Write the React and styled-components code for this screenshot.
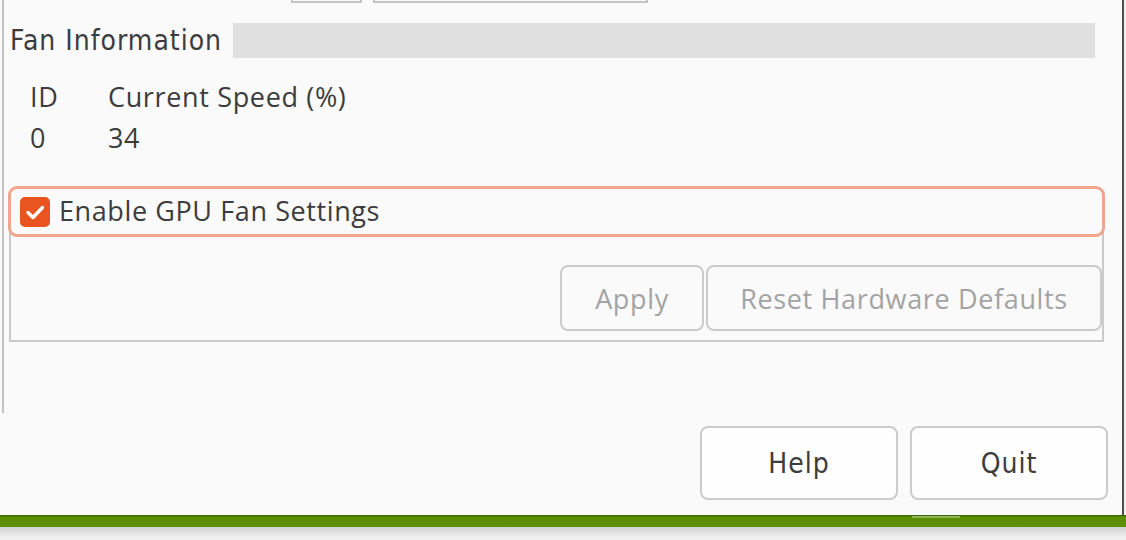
import styled, { createGlobalStyle } from "styled-components"

const GlobalStyle = createGlobalStyle`
    html, body {
        margin: 0;
        padding: 0;
        background: #f2f2f2;
    }
    * {
        box-sizing: border-box;
    }
`

const narrowFont = `"DejaVu Sans Condensed", "Liberation Sans Narrow", sans-serif`
const bodyFont = `"Open Sans", "Noto Sans", sans-serif`

const Screen = styled.div`
    width: 1126px;
    height: 540px;
    display: flex;
    flex-direction: column;
    overflow: hidden;
    background: #f3f3f3;
    font-family: ${bodyFont};
    color: #3c3c3c;
`
const Window = styled.div`
    width: 1124px;
    height: 515px;
    flex-shrink: 0;
    background: #fafafa;
    border-right: 2px solid #4d4d4d;
    display: flex;
    flex-direction: column;
`
const Desktop = styled.div`
    height: 12px;
    flex-shrink: 0;
    background: linear-gradient(#3e6a00 0, #3e6a00 1px, #5a8d00 2px, #5c9100 100%);
    padding-left: 912px;
`
const DesktopMark = styled.div`
    width: 48px;
    height: 2px;
    margin-top: 1px;
    background: #8fb45c;
`
const Shadow = styled.div`
    flex: 1;
    background: linear-gradient(#d2d2d2, #ededed 70%, #f2f2f2);
`
const Page = styled.div`
    margin-left: 2px;
    height: 413px;
    border-left: 2px solid #c2c2c2;
    display: flex;
    flex-direction: column;
`
const StubRow = styled.div`
    display: flex;
    gap: 11px;
    padding-left: 287px;
`
const Stub = styled.div`
    width: ${props => props.w}px;
    height: 3px;
    border: 2px solid #c4c4c4;
    border-top: none;
`
const SectionRow = styled.div`
    display: flex;
    align-items: center;
    gap: 11px;
    margin-top: 20px;
    padding-left: 6px;
    padding-right: 27px;
`
const SectionLabel = styled.div`
    font-family: ${narrowFont};
    font-size: 28px;
    letter-spacing: 1px;
    line-height: 35px;
    white-space: nowrap;
`
const SectionBar = styled.div`
    flex: 1;
    height: 35px;
    background: #e0e0e0;
`
const Table = styled.div`
    display: grid;
    grid-template-columns: 78px auto;
    justify-content: start;
    padding-left: 26px;
    margin-top: 18px;
    font-size: 27px;
    letter-spacing: 0.65px;
    line-height: 41px;
`
const Cell = styled.div`
    white-space: nowrap;
`
const Frame = styled.div`
    display: flex;
    flex-direction: column;
    margin-top: 28px;
    padding-left: 4px;
    padding-right: 17px;
`
const FocusRing = styled.label`
    position: relative;
    z-index: 1;
    height: 51px;
    display: flex;
    align-items: center;
    gap: 9px;
    padding: 0 0 2px 9px;
    border: 3px solid #f0a68c;
    border-radius: 9px;
    background: #fafafa;
    font-size: 27px;
    letter-spacing: 0.6px;
`
const Check = styled.span`
    width: 30px;
    height: 30px;
    margin-top: 2px;
    border-radius: 5px;
    background: #e95420;
    display: flex;
    align-items: center;
    justify-content: center;
`
const FrameBody = styled.div`
    margin: -25px 1px 0;
    height: 130px;
    border: 2px solid #cacaca;
    display: flex;
    justify-content: flex-end;
    align-items: flex-end;
    gap: 2px;
    padding: 0 0 9px;
`
const Button = styled.button`
    height: ${props => props.h}px;
    width: ${props => props.w}px;
    border: 2px solid #cbcbcb;
    border-radius: 8px;
    background: ${props => (props.disabled ? "#fafafa" : "#fefefe")};
    color: ${props => (props.disabled ? "#a3a3a3" : "#3c3c3c")};
    font-family: ${props => (props.narrow ? narrowFont : bodyFont)};
    font-size: ${props => (props.narrow ? 28 : 27)}px;
    letter-spacing: ${props => (props.narrow ? "1px" : "0.65px")};
    padding: 0;
    cursor: pointer;
`
const ActionRow = styled.div`
    display: flex;
    justify-content: flex-end;
    gap: 12px;
    margin-top: 13px;
    padding-right: 14px;
`

const App = () => {
    return (
        <>
            <GlobalStyle />
            <Screen>
                <Window>
                    <Page>
                        <StubRow>
                            <Stub w={71} />
                            <Stub w={275} />
                        </StubRow>
                        <SectionRow>
                            <SectionLabel>Fan Information</SectionLabel>
                            <SectionBar />
                        </SectionRow>
                        <Table>
                            <Cell>ID</Cell>
                            <Cell>Current Speed (%)</Cell>
                            <Cell>0</Cell>
                            <Cell>34</Cell>
                        </Table>
                        <Frame>
                            <FocusRing>
                                <Check>
                                    <svg width="26" height="26" viewBox="0 0 26 26">
                                        <path d="M6 13.5l5 5L20.5 8.5" fill="none" stroke="#fff" strokeWidth="3.4" strokeLinecap="round" strokeLinejoin="round" />
                                    </svg>
                                </Check>
                                Enable GPU Fan Settings
                            </FocusRing>
                            <FrameBody>
                                <Button disabled w={144} h={66}>Apply</Button>
                                <Button disabled w={396} h={66}>Reset Hardware Defaults</Button>
                            </FrameBody>
                        </Frame>
                    </Page>
                    <ActionRow>
                        <Button narrow w={198} h={74}>Help</Button>
                        <Button narrow w={198} h={74}>Quit</Button>
                    </ActionRow>
                </Window>
                <Desktop>
                    <DesktopMark />
                </Desktop>
                <Shadow />
            </Screen>
        </>
    )
}

export default App
